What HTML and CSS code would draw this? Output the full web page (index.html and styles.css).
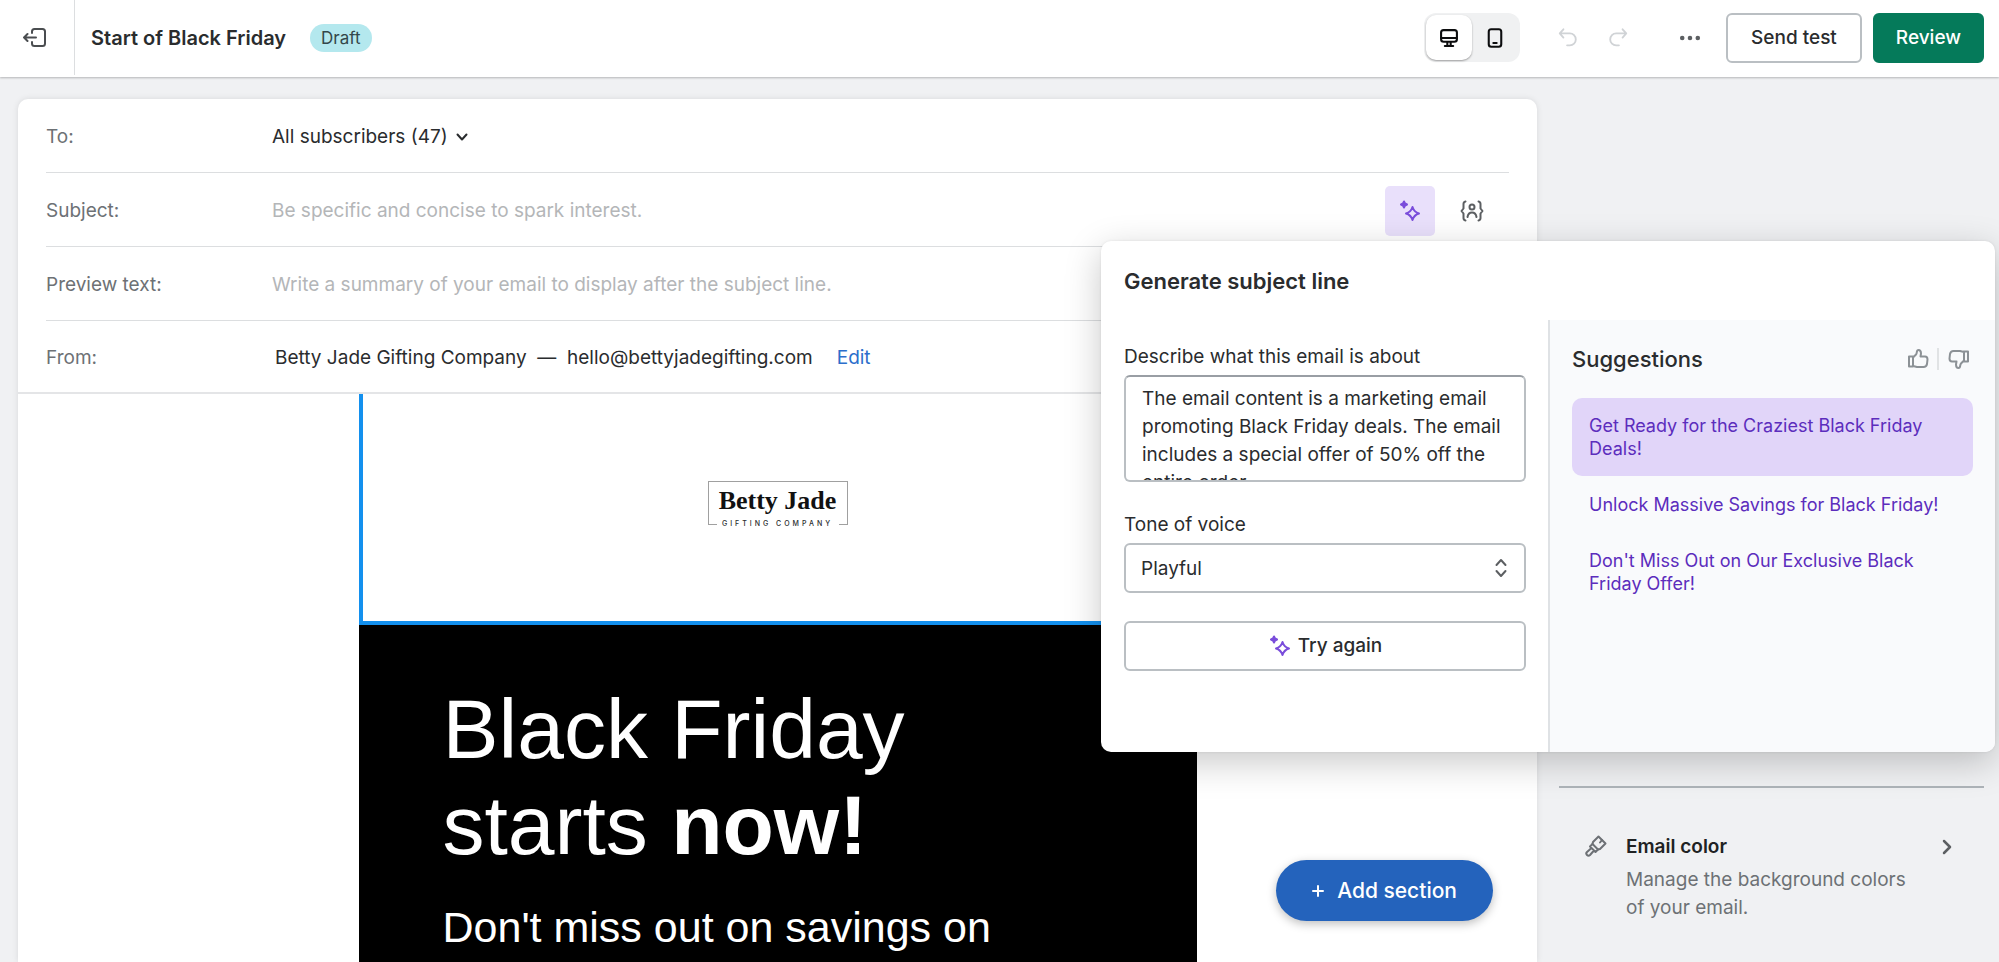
FILE: index.html
```html
<!DOCTYPE html>
<html lang="en">
<head>
  <meta charset="UTF-8">
  <meta name="viewport" content="width=device-width, initial-scale=1.0">
  <title>Start of Black Friday</title>
  <link rel="stylesheet" href="styles.css">
</head>
<body>
  <header class="topbar">
    <button class="exit-btn" type="button" aria-label="Exit editor">
      <svg class="icon" viewBox="0 0 24 24"><path d="M9 7V5.500a2.500 2.500 0 0 1 2.500-2.500h8A2.500 2.500 0 0 1 22 5.500v12a2.500 2.500 0 0 1-2.500 2.500h-8A2.500 2.500 0 0 1 9 17.500V16"/><path d="M13 11.500H1M4.500 8L1 11.500 4.500 15"/></svg>
    </button>
    <h1 class="title">Start of Black Friday</h1>
    <span class="badge">Draft</span>

    <div class="actions">
      <div class="device-toggle">
        <button class="device active" type="button" aria-label="Desktop preview">
          <svg class="icon" viewBox="0 0 24 24"><rect x="2.500" y="2.500" width="19" height="14" rx="3"/><path d="M3 12h18M10 17v4M14 17v4M7 21.500h10"/></svg>
        </button>
        <button class="device" type="button" aria-label="Mobile preview">
          <svg class="icon" viewBox="0 0 24 24"><rect x="4.500" y="1.500" width="15" height="21" rx="3"/><path d="M10 18h4"/></svg>
        </button>
      </div>
      <div class="history">
        <button class="icon-btn" type="button" aria-label="Undo" disabled>
          <svg class="icon" viewBox="0 0 24 24"><path d="M7 2.500L3 7l4 4.500M3.500 7H14a6.500 6.500 0 0 1 0 13h-3"/></svg>
        </button>
        <button class="icon-btn" type="button" aria-label="Redo" disabled>
          <svg class="icon" viewBox="0 0 24 24"><path d="M17 2.500L21 7l-4 4.500M20.500 7H10a6.500 6.500 0 0 0 0 13h3"/></svg>
        </button>
      </div>
      <button class="icon-btn more" type="button" aria-label="More actions">
        <svg class="icon" viewBox="0 0 24 24"><circle cx="3.500" cy="12" r="2.500"/><circle cx="12" cy="12" r="2.500"/><circle cx="20.500" cy="12" r="2.500"/></svg>
      </button>
      <button class="btn" type="button">Send test</button>
      <button class="btn btn-primary" type="button">Review</button>
    </div>
  </header>

  <main class="workspace">
    <section class="editor">
      <div class="fields">
        <div class="field">
          <span class="field-label">To:</span>
          <button class="picker" type="button">All subscribers (47)
            <svg class="caret" viewBox="0 0 14 14"><path d="M2.500 4.500L7 9.500l4.500-5"/></svg>
          </button>
        </div>
        <div class="field">
          <label class="field-label" for="subject">Subject:</label>
          <input class="field-input" id="subject" type="text" placeholder="Be specific and concise to spark interest.">
          <button class="tool-btn magic" type="button" aria-label="Generate subject line">
            <svg class="sparkle" viewBox="0 0 24 24"><path class="fill" d="M6 2.500l1 2 2 1-2 1-1 2-1-2-2-1 2-1z"/><path d="M14.500 8q1.500 5 6.500 6.500-5 1.500-6.500 6.500Q13 16 8 14.500 13 13 14.500 8z"/></svg>
          </button>
          <button class="tool-btn" type="button" aria-label="Insert variable">
            <svg class="icon" viewBox="0 0 24 24"><path d="M5.500 2.500A2.500 2.500 0 0 0 3.500 5v4.500L1.500 12l2 2.500V19a2.500 2.500 0 0 0 2 2.500M18.500 2.500a2.500 2.500 0 0 1 2 2.500v4.500l2 2.500-2 2.500V19a2.500 2.500 0 0 1-2 2.500"/><circle cx="12" cy="8" r="2.500"/><path d="M7.500 18c.5-3 2-4.500 4.500-4.500s4 1.500 4.500 4.500"/></svg>
          </button>
        </div>
        <div class="field">
          <label class="field-label" for="preview">Preview text:</label>
          <input class="field-input" id="preview" type="text" placeholder="Write a summary of your email to display after the subject line.">
        </div>
        <div class="field">
          <span class="field-label">From:</span>
          <span class="sender">Betty Jade Gifting Company &nbsp;—&nbsp; hello@bettyjadegifting.com</span>
          <a class="edit-link" href="#">Edit</a>
        </div>
      </div>

      <div class="email">
        <div class="email-logo">
          <div class="logo">
            <span class="logo-name">Betty Jade</span>
            <span class="logo-tag">GIFTING COMPANY</span>
          </div>
        </div>
        <div class="email-hero">
          <h2>Black Friday<br>starts <strong>now!</strong></h2>
          <p>Don't miss out on savings on</p>
        </div>
      </div>

      <button class="add-section" type="button">
        <svg class="plus" viewBox="0 0 12 12"><path d="M6 1v10M1 6h10"/></svg>
        Add section
      </button>
    </section>

    <aside class="sidebar">
      <a class="setting" href="#">
        <svg class="icon" viewBox="0 0 24 24"><path d="M14.500 2.500l7 7-5.500 5.500-2 .5-5.500-5.500.5-2z"/><path d="M18 6l-2 2.500M8.500 10L6 12.500l5.500 5.500 2.500-2.500M7.500 14l-4.500 4a2 2 0 0 0 3 3l4-4.500"/></svg>
        <span class="setting-text">
          <strong>Email color</strong>
          <span>Manage the background colors of your email.</span>
        </span>
        <svg class="chevron" viewBox="0 0 12 16"><path d="M3 2l6 6-6 6"/></svg>
      </a>
    </aside>
  </main>

  <div class="popover" role="dialog" aria-labelledby="popover-title">
    <h2 class="popover-title" id="popover-title">Generate subject line</h2>
    <div class="popover-body">
      <form class="generate">
        <label for="about">Describe what this email is about</label>
        <textarea id="about">The email content is a marketing email promoting Black Friday deals. The email includes a special offer of 50% off the entire order.</textarea>
        <label for="tone">Tone of voice</label>
        <div class="select">
          <select id="tone">
            <option>Playful</option>
          </select>
          <svg class="select-icon" viewBox="0 0 12 20"><path d="M1.500 7L6 2l4.500 5M1.500 13L6 18l4.500-5"/></svg>
        </div>
        <button class="btn try-again" type="button">
          <svg class="sparkle" viewBox="0 0 24 24"><path class="fill" d="M6 2.500l1 2 2 1-2 1-1 2-1-2-2-1 2-1z"/><path d="M14.500 8q1.500 5 6.500 6.500-5 1.500-6.500 6.500Q13 16 8 14.500 13 13 14.500 8z"/></svg>
          Try again
        </button>
      </form>
      <section class="suggestions">
        <div class="suggestions-head">
          <h3>Suggestions</h3>
          <div class="votes">
            <button class="vote" type="button" aria-label="Good suggestions">
              <svg viewBox="0 0 22 22"><path d="M2 8.500h4v10H2zM6 9.500l3-3c1.500-1.500 0-4.500 2.500-4.500S14 4 14 5.500L13.500 8.500H18c2 0 2.500 1.500 2.500 3L20 16c-.5 2.500-2 3-3.500 3H10l-4-1"/></svg>
            </button>
            <button class="vote" type="button" aria-label="Bad suggestions">
              <svg viewBox="0 0 22 22"><path d="M20 13.500h-4v-10h4zM16 12.500l-3 3c-1.500 1.500 0 4.500-2.500 4.500S8 18 8 16.500l.5-3H4c-2 0-2.500-1.500-2.500-3L2 6c.5-2.500 2-3 3.500-3H12l4 1"/></svg>
            </button>
          </div>
        </div>
        <div class="suggestion-list">
          <button class="suggestion selected" type="button">Get Ready for the Craziest Black Friday Deals!</button>
          <button class="suggestion" type="button">Unlock Massive Savings for Black Friday!</button>
          <button class="suggestion" type="button">Don't Miss Out on Our Exclusive Black Friday Offer!</button>
        </div>
      </section>
    </div>
  </div>
</body>
</html>
```

FILE: styles.css
```css
* {
  box-sizing: border-box;
}
body {
  margin: 0;
  height: 100vh;
  display: flex;
  flex-direction: column;
  overflow: hidden;
  position: relative;
  font-family: Inter, "Liberation Sans", sans-serif;
  font-size: 19px;
  line-height: 28px;
  color: #2a2c2e;
  background: #f0f1f3;
}
h1, h2, h3, p {
  margin: 0;
}
button, input, select, textarea {
  font: inherit;
  color: inherit;
}
button {
  padding: 0;
  border: none;
  background: none;
  cursor: pointer;
}
svg {
  display: block;
  flex: none;
  fill: none;
  stroke: currentColor;
  stroke-width: 2;
  stroke-linecap: round;
  stroke-linejoin: round;
}
.icon {
  width: 24px;
  height: 24px;
}

/* Top bar */
.topbar {
  flex: none;
  display: flex;
  align-items: center;
  height: 77px;
  padding: 0 15px 2px 0;
  background: #fff;
  box-shadow: 0 1px 2px rgba(0, 0, 0, 0.25);
  z-index: 1;
}
.exit-btn {
  display: flex;
  align-items: center;
  justify-content: center;
  align-self: stretch;
  width: 75px;
  padding-right: 5px;
  border-right: 1px solid #dcdee0;
  color: #4a4d50;
}
.title {
  margin: 0 24px 0 16px;
  font-size: 20px;
  font-weight: 600;
}
.badge {
  padding: 0 11px;
  border-radius: 14px;
  font-size: 17px;
  background: #b4e8ee;
  color: #33474a;
}
.actions {
  display: flex;
  align-items: center;
  margin-left: auto;
}
.device-toggle {
  display: flex;
  padding: 2px;
  border-radius: 12px;
  background: #f0f1f2;
}
.device {
  display: flex;
  align-items: center;
  justify-content: center;
  width: 46px;
  height: 45px;
  border-radius: 10px;
  color: #0c0d0e;
}
.device.active {
  background: #fff;
  box-shadow: 0 1px 2px rgba(0, 0, 0, 0.35);
}
.device .icon {
  width: 20px;
  height: 24px;
}
.history {
  display: flex;
  gap: 28px;
  margin: 0 50px 0 37px;
}
.history .icon {
  width: 22px;
}
.icon-btn {
  color: #5c5f62;
}
.icon-btn:disabled {
  color: #d0d3d6;
}
.more {
  margin-right: 25px;
}
.more .icon {
  width: 22px;
  fill: currentColor;
  stroke: none;
}
.btn {
  display: flex;
  align-items: center;
  justify-content: center;
  height: 50px;
  padding: 0 23px;
  border: 2px solid #babfc3;
  border-radius: 6px;
  font-weight: 500;
  background: #fff;
}
.btn-primary {
  margin-left: 11px;
  padding: 0 21px;
  border-color: #057a5a;
  background: #057a5a;
  color: #fff;
}
.device .icon,
.chevron {
  stroke-width: 2.5;
}

/* Email editor */
.workspace {
  flex: 1;
  display: flex;
  min-height: 0;
}
.editor {
  flex: 1;
  position: relative;
  display: flex;
  flex-direction: column;
  margin: 22px 0 0 18px;
  border-radius: 10px 10px 0 0;
  overflow: hidden;
  background: #fff;
  box-shadow: 0 0 6px rgba(0, 0, 0, 0.1);
}
.fields {
  padding: 0 28px;
  border-bottom: 2px solid #e4e5e7;
}
.field {
  display: flex;
  align-items: center;
  height: 74px;
  padding-top: 2px;
  border-bottom: 1px solid #dcdee0;
}
.field:last-child {
  height: 71px;
  border-bottom: none;
}
.field-label {
  flex: none;
  width: 226px;
  color: #6d7175;
}
.field-input {
  flex: 1;
  padding: 0;
  border: none;
  outline: none;
  background: none;
}
.field-input::placeholder {
  color: #b4b6b8;
}
.picker {
  display: flex;
  align-items: center;
  gap: 7px;
}
.caret {
  width: 14px;
  height: 14px;
}
.tool-btn {
  display: flex;
  align-items: center;
  justify-content: center;
  width: 50px;
  height: 50px;
  margin-right: 12px;
  border-radius: 5px;
  color: #5c5f62;
}
.tool-btn.magic {
  background: #e9e0fb;
}
.sparkle {
  width: 24px;
  height: 24px;
  color: #7a4ddb;
}
.sparkle .fill {
  fill: currentColor;
}
.sender {
  margin-left: 3px;
}
.edit-link {
  margin-left: 24px;
  color: #2c6ecb;
  text-decoration: none;
}

/* Email content */
.email {
  align-self: center;
  width: 838px;
  flex: 1;
  display: flex;
  flex-direction: column;
}
.email-logo {
  display: flex;
  align-items: center;
  justify-content: center;
  height: 231px;
  padding-bottom: 9px;
  border: 4px solid #1390ee;
  border-top: none;
}
.logo {
  display: flex;
  flex-direction: column;
  align-items: center;
  width: 140px;
  height: 44px;
  border: 1px solid #a0a0a0;
  border-bottom: none;
  background: linear-gradient(#a0a0a0, #a0a0a0) left bottom / 8px 1px no-repeat,
    linear-gradient(#a0a0a0, #a0a0a0) right bottom / 8px 1px no-repeat;
}
.logo-name {
  font-family: "Liberation Serif", serif;
  font-size: 26px;
  font-weight: 700;
  line-height: 38px;
  color: #111;
}
.logo-tag {
  font-size: 7px;
  font-weight: 500;
  line-height: 8px;
  letter-spacing: 3px;
}
.email-hero {
  flex: 1;
  padding: 56px 84px 0;
  font-family: "Liberation Sans", Arial, sans-serif;
  color: #fff;
  background: #000;
}
.email-hero h2 {
  margin-bottom: 23px;
  font-size: 84px;
  font-weight: 400;
  line-height: 96px;
}
.email-hero p {
  font-size: 43px;
  line-height: 62px;
}
.add-section {
  position: absolute;
  right: 44px;
  bottom: 41px;
  display: flex;
  align-items: center;
  gap: 13px;
  height: 61px;
  padding: 0 36px;
  border-radius: 31px;
  font-size: 21px;
  font-weight: 500;
  background: #2463bc;
  color: #fff;
  box-shadow: 0 3px 10px rgba(0, 0, 0, 0.25);
}
.plus {
  width: 12px;
  height: 12px;
}

/* Sidebar */
.sidebar {
  display: flex;
  flex-direction: column;
  justify-content: flex-end;
  width: 462px;
  padding: 0 15px 40px 22px;
}
.setting {
  display: flex;
  align-items: flex-start;
  padding: 45px 31px 0 25px;
  border-top: 2px solid #aeb4b9;
  color: #6d7175;
  text-decoration: none;
}
.setting .icon {
  margin: 1px 18px 0 0;
}
.setting-text {
  flex: 1;
  padding-right: 30px;
}
.setting-text strong {
  display: block;
  margin-bottom: 5px;
  font-weight: 600;
  color: #202223;
}
.chevron {
  width: 12px;
  height: 16px;
  margin-top: 6px;
  color: #5c5f62;
}

/* Subject line generator */
.popover {
  position: absolute;
  top: 241px;
  right: 4px;
  width: 894px;
  border-radius: 10px;
  overflow: hidden;
  background: #fff;
  box-shadow: 0 0 3px rgba(0, 0, 0, 0.08), 0 10px 36px rgba(0, 0, 0, 0.22);
  z-index: 2;
}
.popover-title {
  padding: 26px 23px 25px;
  font-size: 22px;
  font-weight: 600;
}
.popover-body {
  display: grid;
  grid-template-columns: 1fr 1fr;
}
.generate {
  display: flex;
  flex-direction: column;
  padding: 23px 22px 81px 23px;
}
.generate label {
  margin-bottom: 4px;
}
.generate textarea {
  height: 107px;
  margin-bottom: 29px;
  padding: 8px 16px;
  border: 2px solid #babfc3;
  border-top-color: #999ea4;
  border-radius: 6px;
  overflow: hidden;
  resize: none;
}
.select {
  position: relative;
  margin-bottom: 28px;
}
.select select {
  display: block;
  width: 100%;
  height: 50px;
  padding: 1px 15px 0;
  border: 2px solid #babfc3;
  border-radius: 6px;
  appearance: none;
  background: #fff;
}
.select-icon {
  position: absolute;
  top: 15px;
  right: 19px;
  width: 12px;
  height: 20px;
  color: #5c5f62;
  pointer-events: none;
}
.try-again {
  gap: 6px;
}
.suggestions {
  padding: 25px 22px 0;
  border-left: 2px solid #dfe2e5;
  background: #f9fafc;
}
.suggestions-head {
  display: flex;
  align-items: center;
  justify-content: space-between;
  margin-bottom: 25px;
}
.suggestions h3 {
  font-size: 22px;
  font-weight: 500;
}
.votes {
  display: flex;
  align-items: center;
  color: #8c9196;
}
.vote {
  padding: 0 3px 0 9px;
}
.vote:first-child {
  padding: 0 8px 0 0;
  border-right: 2px solid #e1e3e5;
}
.vote svg {
  width: 22px;
  height: 22px;
}
.suggestion-list {
  display: flex;
  flex-direction: column;
  gap: 1px;
}
.suggestion {
  padding: 16px 17px;
  border-radius: 10px;
  font-size: 18px;
  line-height: 23px;
  text-align: left;
  color: #5c2dbd;
}
.suggestion.selected {
  background: #e1d5f9;
}
```
